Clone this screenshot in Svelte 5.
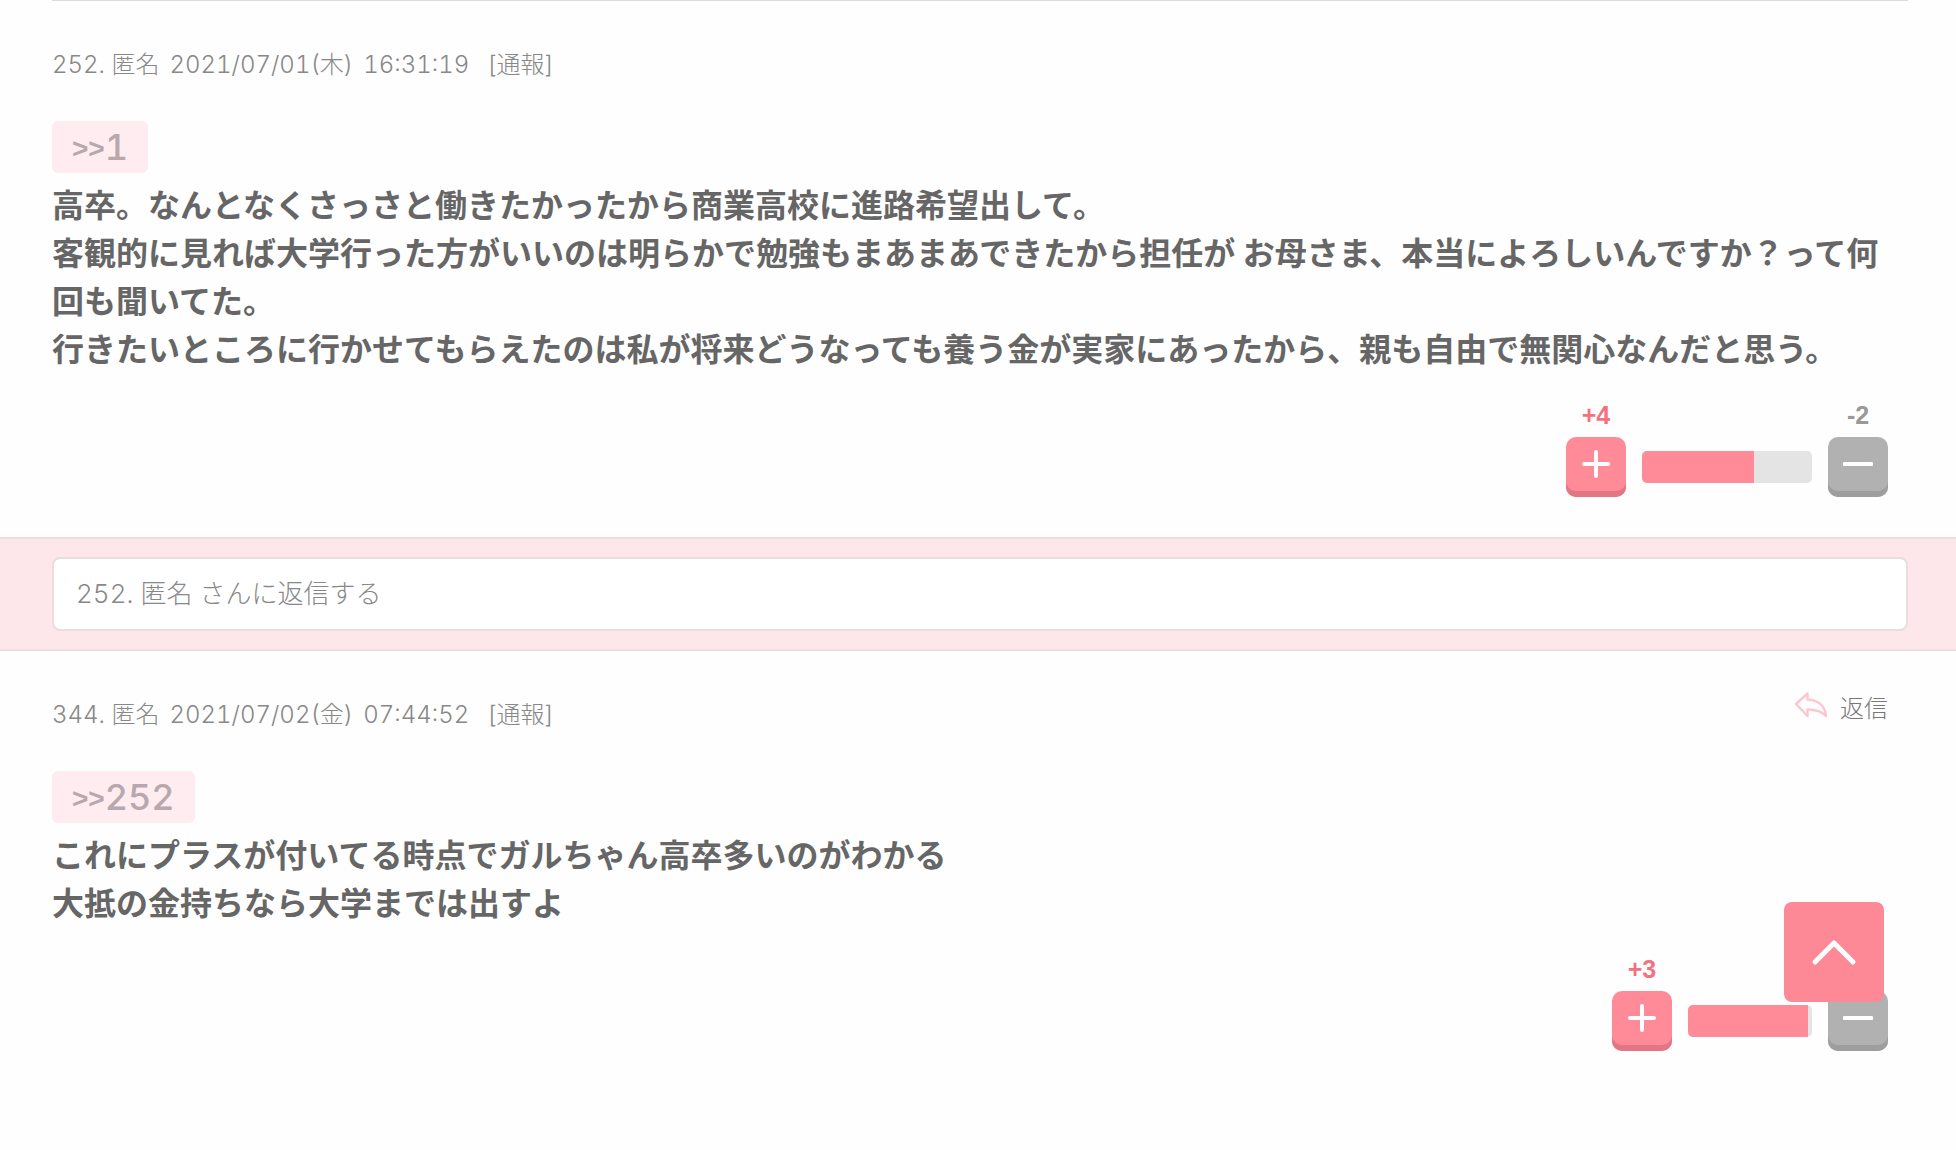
<script lang="ts">
interface Comment {
  id: number;
  name: string;
  date: string;
  time: string;
  anchor: number;
  lines: string[];
  plus: number;
  minus: number;
  barWidth: number;
  plusWidth: number;
  canReply: boolean;
}

const comments: Comment[] = [
  {
    id: 252,
    name: "匿名",
    date: "2021/07/01(木)",
    time: "16:31:19",
    anchor: 1,
    lines: [
      "高卒。なんとなくさっさと働きたかったから商業高校に進路希望出して。",
      "客観的に見れば大学行った方がいいのは明らかで勉強もまあまあできたから担任が お母さま、本当によろしいんですか？って何回も聞いてた。",
      "行きたいところに行かせてもらえたのは私が将来どうなっても養う金が実家にあったから、親も自由で無関心なんだと思う。",
    ],
    plus: 4,
    minus: 2,
    barWidth: 170,
    plusWidth: 112,
    canReply: false,
  },
  {
    id: 344,
    name: "匿名",
    date: "2021/07/02(金)",
    time: "07:44:52",
    anchor: 252,
    lines: [
      "これにプラスが付いてる時点でガルちゃん高卒多いのがわかる",
      "大抵の金持ちなら大学までは出すよ",
    ],
    plus: 3,
    minus: 0,
    barWidth: 124,
    plusWidth: 120,
    canReply: true,
  },
];

let replyText = $state("");

function scrollToTop() {
  window.scrollTo({ top: 0, behavior: "smooth" });
}
</script>

{#snippet commentItem(comment: Comment)}
  <article class="comment">
    <header class="comment-header">
      <p class="meta">
        <span>{comment.id}. {comment.name}</span>
        <span>{comment.date}</span>
        <span>{comment.time}</span>
        <a class="report" href="#report">[通報]</a>
      </p>
      {#if comment.canReply}
        <a class="reply-link" href="#reply">
          <svg width="34" height="28" viewBox="0 0 34 28" aria-hidden="true">
            <path
              d="M2 13 L13.500 2.500 V8.500 C23 9 31 14 32 25 C27 19.500 21 18.500 13.500 18.500 V25 Z"
              fill="none"
              stroke="#fbc8d2"
              stroke-width="2.500"
              stroke-linejoin="round"
            />
          </svg>
          返信
        </a>
      {/if}
    </header>

    <a class="anchor" href="#comment{comment.anchor}"><span class="arrows">&gt;&gt;</span>{comment.anchor}</a>

    <div class="body">
      {#each comment.lines as line}
        <p>{line}</p>
      {/each}
    </div>

    <div class="votes">
      <div class="vote plus">
        <span class="count">+{comment.plus}</span>
        <button type="button" aria-label="プラス">
          <svg width="30" height="30" viewBox="0 0 30 30" aria-hidden="true">
            <path d="M15 3 V27 M3 15 H27" />
          </svg>
        </button>
      </div>
      <div class="bar" style:width="{comment.barWidth}px">
        <div class="bar-fill" style:width="{comment.plusWidth}px"></div>
      </div>
      <div class="vote minus">
        <span class="count">-{comment.minus}</span>
        <button type="button" aria-label="マイナス">
          <svg width="30" height="30" viewBox="0 0 30 30" aria-hidden="true">
            <path d="M1.500 15 H28.500" />
          </svg>
        </button>
      </div>
    </div>
  </article>
{/snippet}

<main>
  <hr />
  {@render commentItem(comments[0])}

  <form class="reply-form">
    <input
      type="text"
      aria-label="返信"
      placeholder="252. 匿名 さんに返信する"
      bind:value={replyText}
    />
  </form>

  {@render commentItem(comments[1])}
</main>

<button class="page-top" type="button" aria-label="ページの先頭へ" onclick={scrollToTop}>
  <svg width="46" height="28" viewBox="0 0 46 28" aria-hidden="true">
    <path d="M4 24 L23 5 L42 24" />
  </svg>
</button>

<style>
  :global(body) {
    background: #fefefe;
  }

  main,
  input {
    font-family: Inter, "Noto Sans CJK JP", sans-serif;
    font-variant-numeric: tabular-nums;
  }

  hr {
    height: 1px;
    margin: 0 48px 0 52px;
    border: none;
    background: #dcdcdc;
  }

  .comment {
    padding: 44px 48px 40px 52px;
  }

  .comment-header {
    display: flex;
    justify-content: space-between;
    align-items: flex-start;
    padding-right: 20px;
    margin-bottom: 36px;
  }

  p {
    margin: 0;
  }

  .meta {
    display: flex;
    gap: 10px;
    font-size: 24px;
    font-weight: 300;
    line-height: 40px;
    color: #888;
  }

  a {
    color: inherit;
    text-decoration: none;
  }

  .report {
    margin-left: 8px;
  }

  .reply-link {
    display: flex;
    align-items: center;
    gap: 12px;
    margin-top: -4px;
    font-size: 24px;
    font-weight: 300;
    line-height: 36px;
    color: #777;
  }

  .reply-link svg {
    align-self: flex-start;
  }

  .anchor {
    display: inline-flex;
    align-items: center;
    height: 52px;
    padding: 0 20px;
    border-radius: 6px;
    box-sizing: border-box;
    background: #feecf0;
    font-size: 36px;
    font-weight: 500;
    color: #b8a8ad;
  }

  .arrows {
    padding-top: 4px;
    font-family: "Liberation Sans", sans-serif;
    font-size: 28px;
    font-weight: 700;
  }

  .body {
    margin-top: 6px;
    font-family: "Noto Sans CJK JP", sans-serif;
    font-size: 32px;
    font-weight: 700;
    line-height: 48px;
    color: #666;
  }

  .votes {
    display: flex;
    justify-content: flex-end;
    align-items: flex-end;
    gap: 16px;
    margin-top: 30px;
    padding-right: 20px;
  }

  .vote {
    display: flex;
    flex-direction: column;
    align-items: center;
    gap: 8px;
    width: 60px;
  }

  .count {
    font-family: "Liberation Sans", sans-serif;
    font-size: 25px;
    font-weight: 700;
    line-height: 28px;
  }

  .plus .count {
    color: #f4727f;
  }

  .minus .count {
    color: #999;
  }

  .vote button {
    display: flex;
    justify-content: center;
    align-items: center;
    width: 60px;
    height: 60px;
    padding: 0 0 6px;
    border: none;
    border-radius: 10px;
    cursor: pointer;
  }

  .plus button {
    background: #ff8b99;
    box-shadow: inset 0 -6px #e27683;
  }

  .minus button {
    background: #b1b1b1;
    box-shadow: inset 0 -6px #9e9e9e;
  }

  .vote path {
    fill: none;
    stroke: #fff;
    stroke-width: 4;
    stroke-linecap: round;
  }

  .bar {
    height: 32px;
    margin-bottom: 14px;
    border-radius: 5px;
    overflow: hidden;
    background: #e4e4e4;
  }

  .bar-fill {
    height: 100%;
    background: #ff8b99;
  }

  .reply-form {
    padding: 18px 48px 18px 52px;
    border-top: 2px solid #ecdde3;
    border-bottom: 2px solid #ecdde3;
    background: #fde7ea;
  }

  input {
    display: block;
    width: 100%;
    height: 74px;
    padding: 0 22px 2px;
    border: 2px solid #e9dddd;
    border-radius: 8px;
    box-sizing: border-box;
    background: #fff;
    font-size: 26px;
    font-weight: 300;
    color: #666;
  }

  input::placeholder {
    color: #888;
    opacity: 1;
  }

  .page-top {
    position: fixed;
    right: 72px;
    bottom: 148px;
    display: flex;
    justify-content: center;
    align-items: center;
    width: 100px;
    height: 100px;
    padding: 0;
    border: none;
    border-radius: 8px;
    background: #fc8995;
    cursor: pointer;
  }

  .page-top path {
    fill: none;
    stroke: #fff;
    stroke-width: 5;
    stroke-linecap: round;
    stroke-linejoin: round;
  }
</style>
